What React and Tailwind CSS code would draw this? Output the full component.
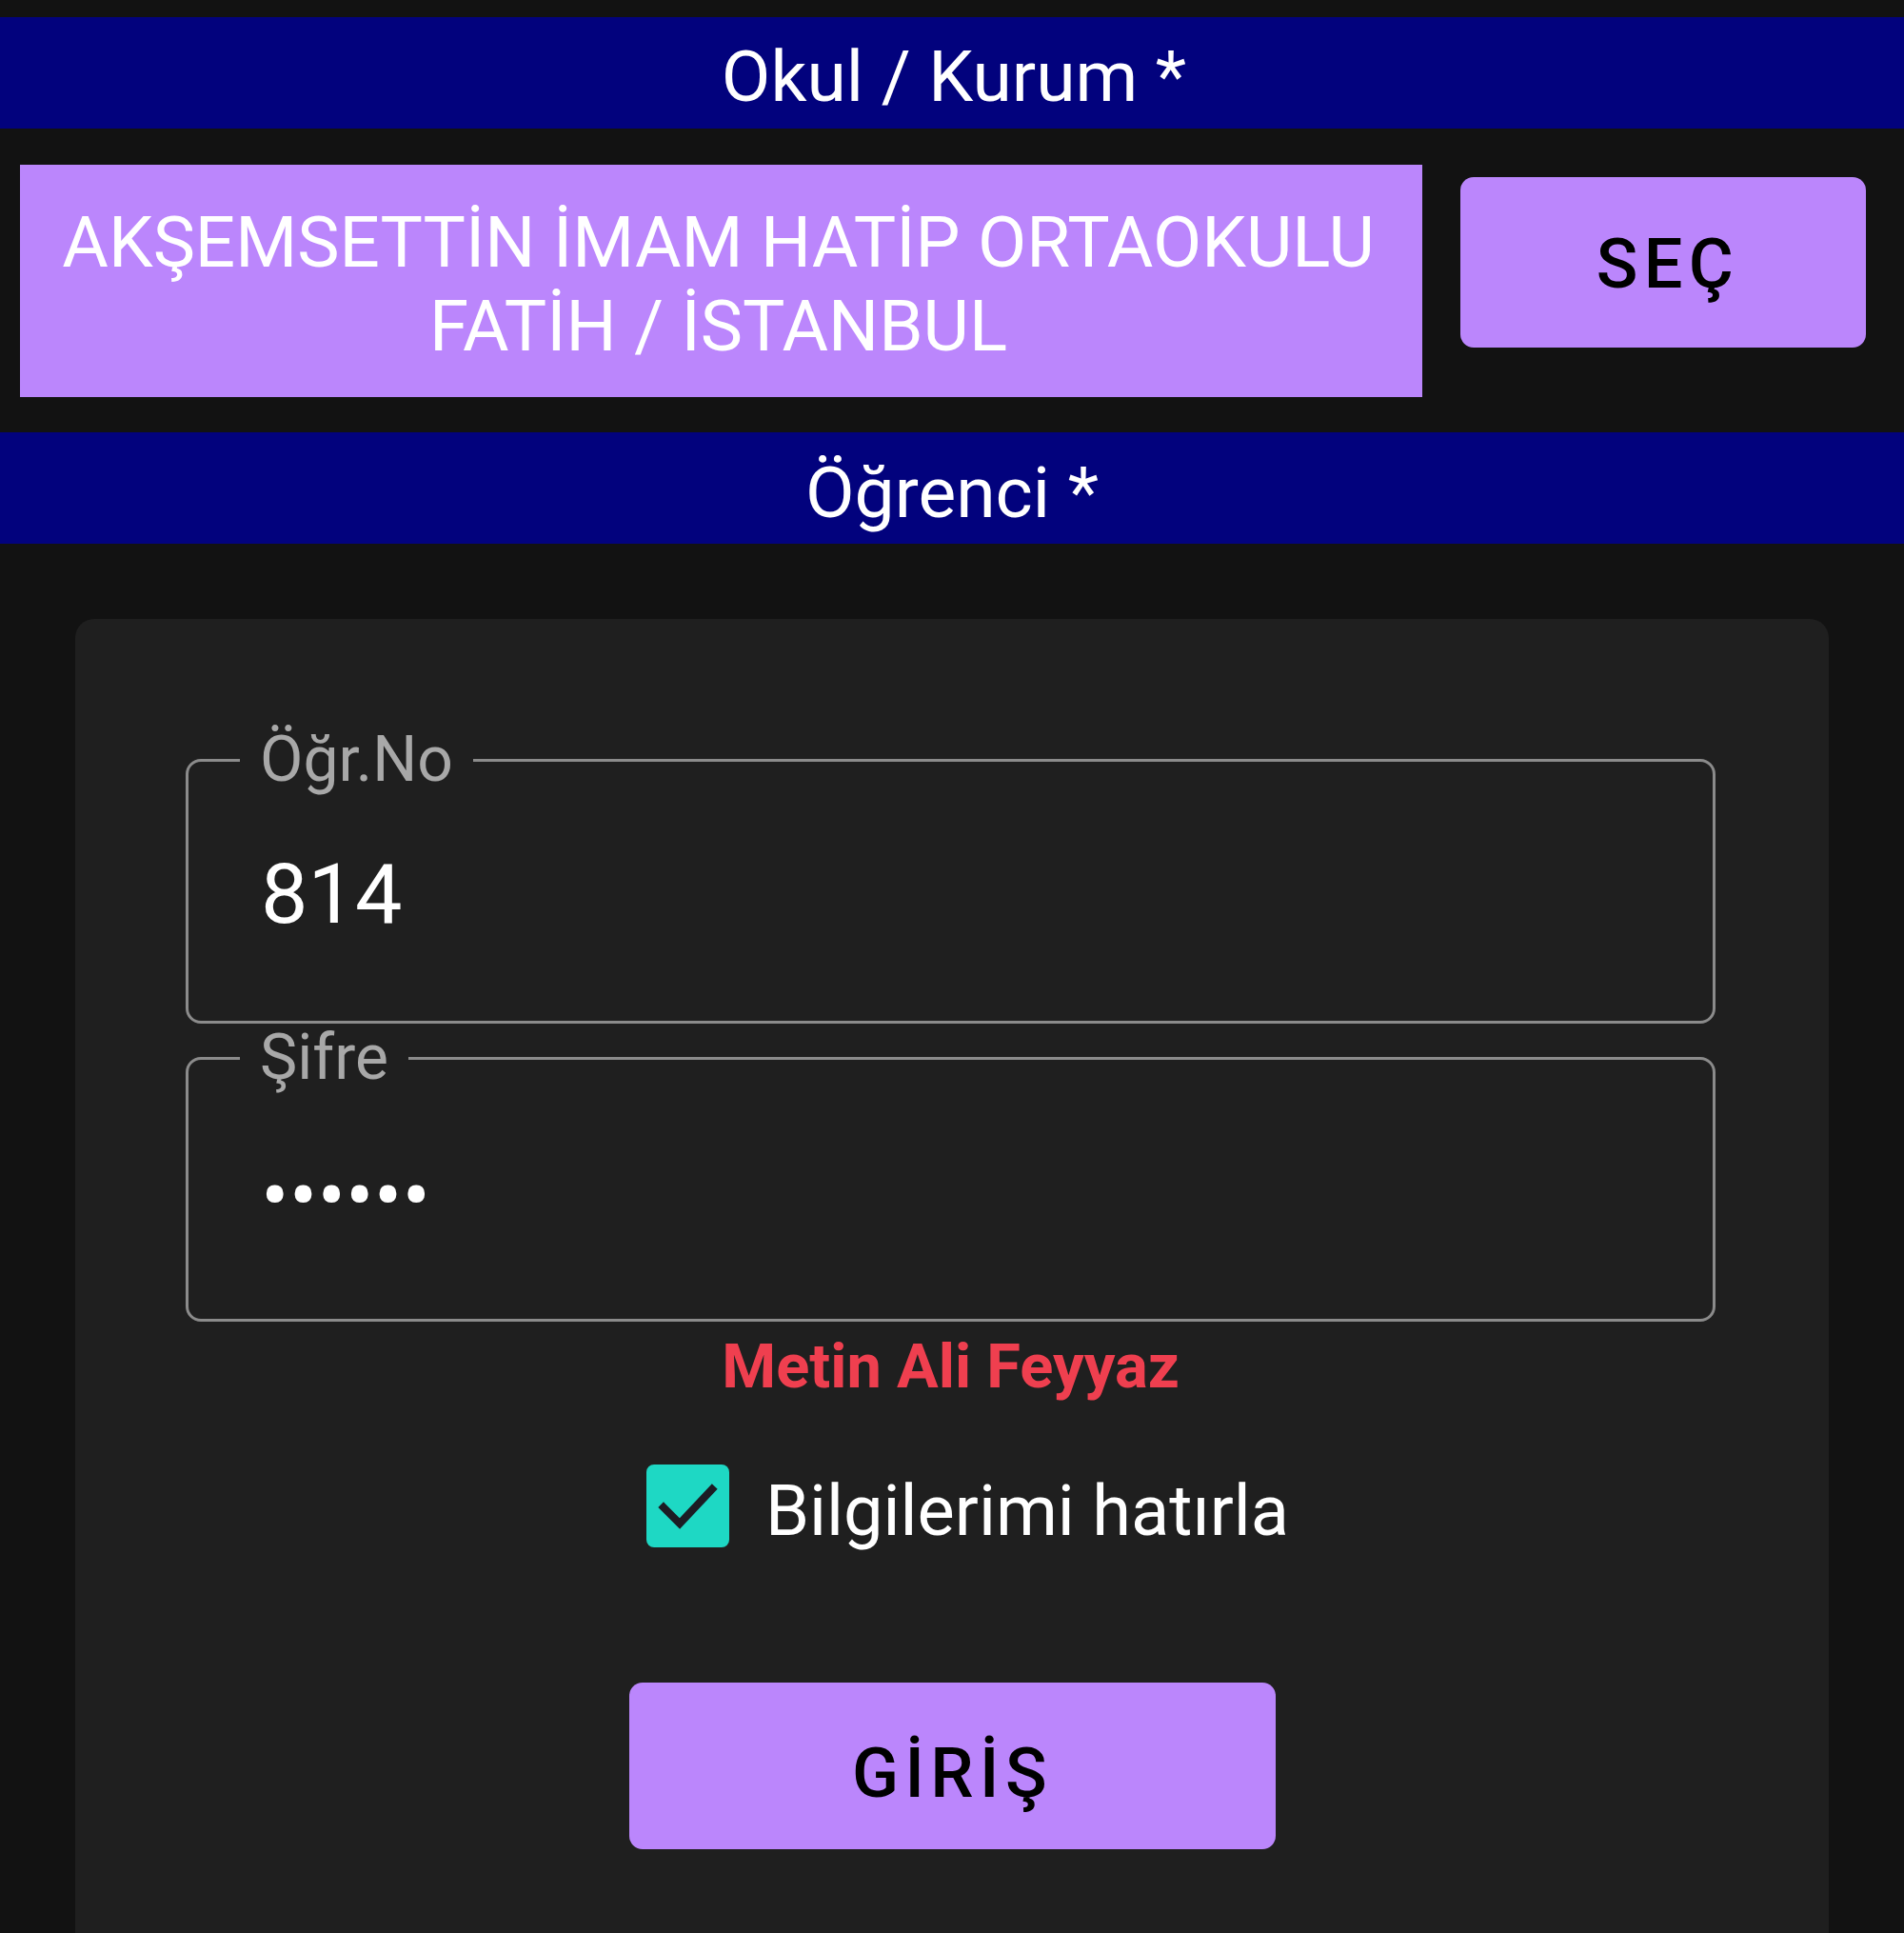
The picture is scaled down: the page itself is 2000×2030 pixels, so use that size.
export default function App() {
  return (
    <div className="min-h-[2030px] bg-[#121212] pt-[18px] font-['Roboto',sans-serif] overflow-hidden">
      {/* Okul / Kurum */}
      <div className="h-[117px] bg-[#02027d] flex items-center justify-center pt-[8px] pl-[4px] text-[75px] text-white leading-none">
        Okul / Kurum *
      </div>

      <div className="mt-[38px] flex items-start">
        <div className="ml-[21px] w-[1473px] h-[244px] bg-[#bb86fc] flex flex-col justify-center items-center text-white text-[74.5px] leading-[88px] pt-[8px] pr-[6px]">
          <span>AKŞEMSETTİN İMAM HATİP ORTAOKULU</span>
          <span>FATİH / İSTANBUL</span>
        </div>
        <button className="ml-[40px] mt-[13px] w-[426px] h-[179px] rounded-[14px] bg-[#bb86fc] text-black text-[72px] font-medium tracking-[0.09em] flex items-center justify-center pt-[4px] pl-[10px]">
          SEÇ
        </button>
      </div>

      {/* Öğrenci */}
      <div className="mt-[37px] h-[117px] bg-[#02027d] flex items-center justify-center pt-[10px] text-[75px] text-white leading-none">
        Öğrenci *
      </div>

      <div className="mt-[79px] mx-[79px] rounded-[20px] bg-[#1f1f1f] pt-[116px] pl-[116px] pr-[119px] pb-[120px]">
        <fieldset className="border-[3px] border-[#8b8b8b] rounded-[16px] pt-[65px] pb-[89px]">
          <legend className="ml-[54px] px-[21px] text-[66px] leading-[64px] text-[#a8a8a8]">Öğr.No</legend>
          <div className="pl-[76px] text-[88px] leading-[88px] text-white">814</div>
        </fieldset>

        <fieldset className="mt-[4px] border-[3px] border-[#8b8b8b] rounded-[16px] pt-[69px] pb-[85px]">
          <legend className="ml-[54px] px-[21px] text-[66px] leading-[64px] text-[#a8a8a8]">Şifre</legend>
          <div className="pl-[76px] text-[88px] leading-[88px] text-white">••••••</div>
        </fieldset>

        <div className="mt-[14px] text-center text-[65px] leading-[66px] font-bold text-[#ef3f4f]">
          Metin Ali Feyyaz
        </div>

        <div className="mt-[70px] flex items-center justify-center pl-[36px]">
          <div className="w-[87px] h-[87px] rounded-[8px] bg-[#1ed8c4] flex items-center justify-center">
            <svg viewBox="0 0 87 87" className="w-[87px] h-[87px]">
              <polyline
                points="18,45 35,62 69,26"
                fill="none"
                stroke="#1c1c24"
                strokeWidth="8"
                strokeLinecap="square"
              />
            </svg>
          </div>
          <span className="ml-[38px] translate-y-[5px] text-[74px] leading-[87px] text-white">Bilgilerimi hatırla</span>
        </div>

        <div className="mt-[142px] flex justify-center">
          <button className="ml-[4px] w-[679px] h-[175px] rounded-[14px] bg-[#bb86fc] text-black text-[72px] font-medium tracking-[0.09em] flex items-center justify-center pt-[16px]">
            GİRİŞ
          </button>
        </div>
      </div>
    </div>
  )
}
